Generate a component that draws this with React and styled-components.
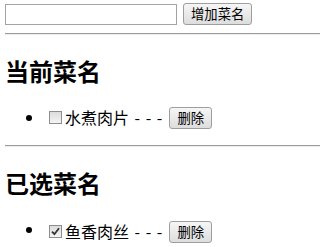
import React, { useState } from 'react';
import styled, { createGlobalStyle } from 'styled-components';

const GlobalStyle = createGlobalStyle`
  body {
    margin: 0;
    background: #fff;
    color: #000;
    font-family: "Noto Sans CJK SC", "Liberation Sans", sans-serif;
    font-size: 16px;
  }
`;

const Page = styled.div`
  padding: 3px 0 0 5px;
`;

const AddRow = styled.div`
  display: flex;
  align-items: center;
  gap: 6px;
  height: 22px;
`;

const TextInput = styled.input`
  box-sizing: border-box;
  width: 172px;
  height: 21px;
  margin: 0;
  padding: 1px 2px;
  border: 1px solid #a3a3a3;
  font-size: 13px;
  outline: none;
`;

const Button = styled.button`
  box-sizing: border-box;
  height: 22px;
  margin: 0;
  padding: 0 7px;
  border: 1px solid #9e9e9e;
  border-radius: 3px;
  background: linear-gradient(#f6f6f6, #dddddd);
  color: #000;
  font-family: "Noto Sans CJK SC", sans-serif;
  font-size: 13.33px;
  line-height: 18px;
`;

const Rule = styled.hr`
  margin: 8px 0;
  border: none;
  border-top: 1px solid #9a9a9a;
  border-bottom: 1px solid #eeeeee;
`;

const Heading = styled.h2`
  margin: 20px 0;
  font-size: 24px;
  line-height: 31px;
  font-weight: bold;
`;

const List = styled.ul`
  margin: 16px 0;
  padding-left: 40px;
  list-style: disc;
`;

const Item = styled.li`
  line-height: 23px;
`;

const ItemBody = styled.span`
  display: inline-flex;
  align-items: center;
  height: 23px;
`;

const CheckBox = styled.span`
  box-sizing: border-box;
  display: inline-flex;
  align-items: center;
  justify-content: center;
  width: 13px;
  height: 13px;
  margin: 0 3px 0 4px;
  border: 1px solid #8e8e8e;
  background: linear-gradient(#dcdcdc, #f4f4f4);
  cursor: pointer;
`;

const Label = styled.span`
  white-space: pre;
  word-spacing: 2px;
  margin-right: 7px;
`;

function DishRow({ name, checked, onToggle, onDelete }) {
  return (
    <Item>
      <ItemBody>
        <CheckBox onClick={onToggle}>
          {checked && (
            <svg width="9" height="9" viewBox="0 0 9 9">
              <path d="M1 4.6 L3.4 7.2 L8 1.2" fill="none" stroke="#333" strokeWidth="1.8" />
            </svg>
          )}
        </CheckBox>
        <Label>{name} - - -</Label>
        <Button onClick={onDelete}>删除</Button>
      </ItemBody>
    </Item>
  );
}

export default function App() {
  const [text, setText] = useState('');
  const [dishes, setDishes] = useState([
    { name: '水煮肉片', checked: false },
    { name: '鱼香肉丝', checked: true },
  ]);

  const add = () => {
    if (!text.trim()) return;
    setDishes([...dishes, { name: text.trim(), checked: false }]);
    setText('');
  };

  const toggle = (i) => setDishes(dishes.map((d, j) => (j === i ? { ...d, checked: !d.checked } : d)));
  const remove = (i) => setDishes(dishes.filter((_, j) => j !== i));

  const render = (want) => dishes
    .map((d, i) => ({ ...d, i }))
    .filter((d) => d.checked === want)
    .map((d) => (
      <DishRow
        key={d.i}
        name={d.name}
        checked={d.checked}
        onToggle={() => toggle(d.i)}
        onDelete={() => remove(d.i)}
      />
    ));

  return (
    <Page>
      <GlobalStyle />
      <AddRow>
        <TextInput value={text} onChange={(e) => setText(e.target.value)} />
        <Button onClick={add}>增加菜名</Button>
      </AddRow>
      <Rule />
      <Heading>当前菜名</Heading>
      <List>{render(false)}</List>
      <Rule />
      <Heading>已选菜名</Heading>
      <List>{render(true)}</List>
    </Page>
  );
}
